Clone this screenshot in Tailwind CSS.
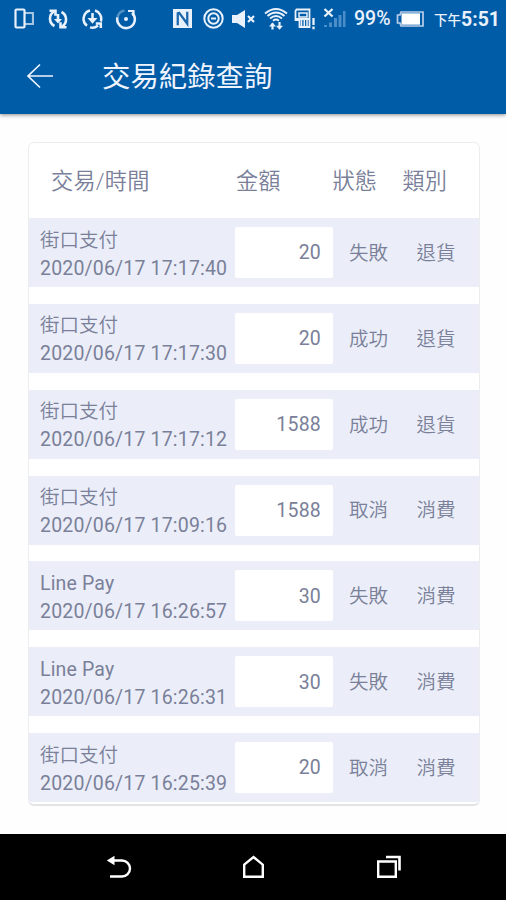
<!DOCTYPE html>
<html lang="zh-Hant">
<head>
<meta charset="utf-8">
<title>交易紀錄查詢</title>
<script src="https://cdn.jsdelivr.net/npm/@tailwindcss/browser@4"></script>
</head>
<body class="w-[506px] h-[900px] overflow-hidden flex flex-col bg-[#fefefe] font-[Roboto,'Noto_Sans_CJK_TC',sans-serif] text-[#7a8099]">
<header class="h-[113.5px] shrink-0 bg-[#005ca6] text-[#f0f4ff] shadow-[0_1px_4px_rgba(0,0,0,0.45)]">
  <div class="h-[37px] flex items-center text-[#e9f1fc]">
    <svg class="ml-[14px] w-5 h-[22px] shrink-0" viewBox="0 0 20 22" fill="none" stroke="currentColor" stroke-width="2.2"><rect x="1.5" y="1.5" width="9" height="18" rx="1"/><path d="M10.5 5H19v11h-8.5" opacity=".7"/></svg>
    <svg class="ml-[14px] w-5 h-[22px] shrink-0" viewBox="0 0 20 22" fill="none" stroke="currentColor" stroke-width="2.6"><path d="M6 3.5A8.3 8.3 0 0 0 6.5 18M14 18.5A8.3 8.3 0 0 0 13.5 4"/><path d="M1.5 2.8h6v5M18.500 19.200h-6v-5M10 6v8"/><path d="M6 11h8L10 15.500z" fill="currentColor" stroke="none"/></svg>
    <svg class="ml-[14px] w-[21px] h-[22px] shrink-0" viewBox="0 0 21 22" fill="none" stroke="currentColor" stroke-width="2.5"><path d="M8 2.500A8.700 8.700 0 0 0 5 17.800M8 19.400A8.700 8.700 0 0 0 16 17.500M18.800 13.500A8.700 8.700 0 0 0 13 2.500M18.800 20v-4.500h-5M10.500 5v7"/><path d="M5.500 10h10L10.500 15.800z" fill="currentColor" stroke="none"/></svg>
    <svg class="ml-[12px] w-[22px] h-[22px] shrink-0" viewBox="0 0 22 22" fill="none" stroke="currentColor" stroke-width="2.5"><path d="M2.500 10a8.700 8.700 0 0 1 7-7.500" opacity=".35"/><path d="M2.400 9.500A8.800 8.800 0 1 0 17 4.800"/><path d="M13 3h5.500v5" stroke-width="2.200"/><circle cx="11" cy="11" r="2" fill="currentColor" stroke="none"/></svg>
    <svg class="ml-[36px] w-[19px] h-[19px] shrink-0" viewBox="0 0 20 20"><rect x="0" y="0" width="20" height="20" fill="currentColor"/><path d="M5 17V4.500l1.500-.5 8.500 11.500V3" fill="none" stroke="#1b67ad" stroke-width="2.400"/></svg>
    <svg class="ml-[11px] w-[21px] h-[21px] shrink-0" viewBox="0 0 21 21" fill="none" stroke="currentColor" stroke-width="2"><circle cx="10.500" cy="10.500" r="9.200"/><circle cx="10.500" cy="10.500" r="5.200"/><path d="M8 10.500h5"/></svg>
    <svg class="ml-[7px] w-6 h-5 shrink-0" viewBox="0 0 24 20"><path d="M1 6h5l8-5v18l-8-5H1z" fill="currentColor"/><path d="M17 7l6 6M23 7l-6 6" stroke="currentColor" stroke-width="2.200"/></svg>
    <svg class="ml-[9px] w-6 h-6 shrink-0" viewBox="0 0 24 24" fill="none" stroke="currentColor" stroke-width="1.900"><path d="M1 6.500q11-9 22 0M3.500 9q8.500-7 17 0M6 11.500q6-5 12 0M9 13.700q3-2.300 6 0" /><path d="M8.500 16.500v6M15.500 15v6" stroke-width="2.200"/><path d="M5 19.500L8.500 15.500l3.500 4zM12 18.800l3.500 4 3.500-4z" fill="currentColor" stroke="none"/></svg>
    <svg class="ml-[6px] w-[22px] h-[22px] shrink-0" viewBox="0 0 22 22" fill="none" stroke="currentColor" stroke-width="1.800"><path d="M2.500 1.500h13v17.500h-10v-7h-4V3z"/><path d="M5 5h8v4H5z" stroke-width="1.500"/><path d="M2 11h13" stroke-width="2"/><path d="M7.500 12v7M10.300 12v7M13 12v7" stroke-width="1.500"/><path d="M19.500 10v7M19.500 18.500v2.700" stroke-width="2.300"/></svg>
    <svg class="ml-[7px] w-6 h-[22px] shrink-0" viewBox="0 0 24 22"><path d="M1.500 1l8 7.500M9.500 1l-8 7.500" stroke="currentColor" stroke-width="2.300"/><path d="M1 17h3v2H1zM6 14.500h3V19H6zM11 10h3v9h-3zM15.500 7h3v12h-3zM20 3h2.500v16H20z" fill="#4b8dc8"/></svg>
    <span class="ml-[7px] w-[38px] pt-px text-[19.500px] leading-none font-medium whitespace-nowrap">99%</span>
    <svg class="ml-[4px] w-[29px] h-4 shrink-0" viewBox="0 0 29 16"><path d="M5 1h22v14H5l-1-3H1.500V4H4z" fill="none" stroke="#b9cdea" stroke-width="1.700"/><rect x="5.500" y="2.300" width="18.500" height="11.400" fill="#fff"/></svg>
    <span class="ml-[9px] w-[28px] pt-[5px] text-[13.500px] leading-none font-medium whitespace-nowrap">下午</span>
    <span class="text-[19.500px] pt-[2px] leading-none font-bold whitespace-nowrap -ml-px">5:51</span>
  </div>
  <div class="h-[77px] flex items-center">
    <svg class="ml-[26px] w-7 h-7" viewBox="0 0 28 28" fill="none" stroke="currentColor" stroke-width="1.700"><path d="M27 14H2M14 2.500L2 14l12 11.500"/></svg>
    <h1 class="ml-[48px] pt-[5px] text-[28.400px] leading-none font-normal">交易紀錄查詢</h1>
  </div>
</header>
<main class="flex-1 px-[28px] pt-[28px]">
  <section class="w-[451.500px] h-[664px] rounded-[6px] bg-white border border-[#ededf0] border-b-2 border-b-[#e4e4e7] overflow-hidden">
    <div class="h-[75.500px] flex items-center text-[22.200px] leading-none font-[350] pt-[2px]">
      <span class="ml-[22px] w-[185px] tracking-[0.200px]">交易/時間</span><span class="w-[96.500px]">金額</span><span class="w-[70px]">狀態</span><span>類別</span>
    </div>
    <div id="rows" class="flex flex-col gap-[16.850px]"></div>
  </section>
</main>
<footer class="h-[66px] shrink-0 bg-black text-white flex items-center">
  <svg class="ml-[106px] w-[26px] h-6" viewBox="0 0 26 24" fill="none" stroke="currentColor" stroke-width="2.400"><path d="M6 5.500h10a8 8 0 0 1 0 16H4"/><path d="M.8 5.500L8.500 .8v9.400z" fill="currentColor" stroke="none"/></svg>
  <svg class="ml-[110px] w-[23px] h-6" viewBox="0 0 23 24" fill="none" stroke="currentColor" stroke-width="2.400"><path d="M2.200 9.700L11.500 2l9.300 7.700v12H2.200z"/></svg>
  <svg class="ml-[111px] w-[26px] h-6" viewBox="0 0 26 24" fill="none" stroke="currentColor" stroke-width="2.400"><path d="M2.200 6.500h17.600v15.300H2.200z"/><path d="M10 2h13.500v13.500" stroke-width="2.600"/></svg>
</footer>
<script>
const records = [
  ['街口支付','2020/06/17 17:17:40','20','失敗','退貨'],
  ['街口支付','2020/06/17 17:17:30','20','成功','退貨'],
  ['街口支付','2020/06/17 17:17:12','1588','成功','退貨'],
  ['街口支付','2020/06/17 17:09:16','1588','取消','消費'],
  ['Line Pay','2020/06/17 16:26:57','30','失敗','消費'],
  ['Line Pay','2020/06/17 16:26:31','30','失敗','消費'],
  ['街口支付','2020/06/17 16:25:39','20','取消','消費']
];
document.getElementById('rows').innerHTML = records.map(([name,time,amount,state,type]) => `
  <div class="h-[69px] shrink-0 bg-[#ebeef8] flex items-center text-[19.500px]">
    <div class="ml-[11px] w-[195px] pt-[4px] leading-[28px] whitespace-nowrap"><div class="${name === 'Line Pay' ? 'font-normal tracking-[0.150px]' : 'font-[350]'}">${name}</div><div class="tracking-[0.180px]">${time}</div></div>
    <div class="w-[98px] h-[51px] bg-white rounded-[2px] flex items-center justify-end pt-px pr-[12px] tracking-[0.200px]">${amount}</div>
    <div class="ml-[16px] w-[67.500px] pt-[2px] font-[350]">${state}</div>
    <div class="pt-[2px] font-[350]">${type}</div>
  </div>`).join('');
</script>
</body>
</html>
